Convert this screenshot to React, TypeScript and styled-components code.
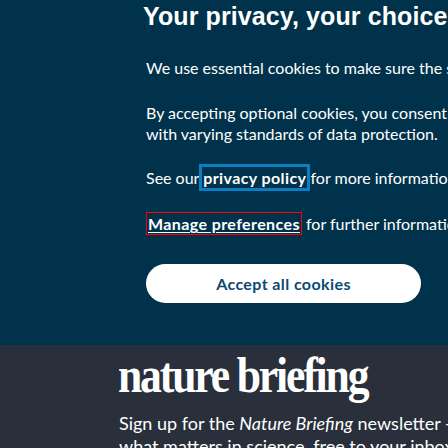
import React from "react";
import styled, { createGlobalStyle } from "styled-components";

const Global = createGlobalStyle`
  html, body { margin: 0; padding: 0; }
  body {
    background: #29303b;
    overflow: hidden;
    width: 448px;
    height: 448px;
    font-family: Lato, "Open Sans", sans-serif;
  }
`;

const Banner = styled.section`
  background: #01324b;
  color: #ffffff;
  padding: 0 0 42px 146px;
  display: flex;
  flex-direction: column;
  align-items: flex-start;
`;

const Title = styled.h2`
  margin: 0 0 0 -3px;
  font-family: "Liberation Sans", Arial, sans-serif;
  font-weight: 700;
  font-size: 25px;
  line-height: 32px;
  letter-spacing: 0.1px;
  white-space: nowrap;
`;

const Para = styled.p<{ $top: number }>`
  margin: ${(p) => p.$top}px 0 0;
  font-size: 16px;
  line-height: 21px;
  white-space: nowrap;
`;

const PolicyLink = styled.a`
  color: #ffffff;
  font-weight: 700;
  letter-spacing: 0.4px;
  text-decoration: none;
  outline: 3px solid #0a7fc4;
  outline-offset: 1px;
`;

const ManageButton = styled.button`
  font: inherit;
  font-weight: 700;
  letter-spacing: 0.4px;
  color: #ffffff;
  background: none;
  border: 1px solid #ff0000;
  padding: 0 1px;
  margin: 0;
  line-height: 21px;
  text-decoration: underline;
  text-underline-offset: 2px;
  cursor: pointer;
`;

const AcceptButton = styled.button`
  margin-top: 29px;
  width: 275px;
  height: 39px;
  padding: 0;
  border: none;
  border-radius: 20px;
  background: #ffffff;
  color: #0a4a75;
  font-family: Lato, "Open Sans", sans-serif;
  font-weight: 700;
  font-size: 16px;
  letter-spacing: 0.4px;
  cursor: pointer;
`;

const Briefing = styled.section`
  background: #29303b;
  color: #ffffff;
  padding: 4px 0 0 119px;
`;

const Logo = styled.div`
  margin-left: -1px;
  font-family: "Liberation Serif", "Times New Roman", serif;
  font-weight: 700;
  font-size: 51px;
  line-height: 52px;
  letter-spacing: -2.5px;
  white-space: nowrap;
  transform: scaleX(0.855);
  transform-origin: left center;
`;

const Pitch = styled.p`
  margin: 11px 0 0;
  font-size: 18px;
  line-height: 23px;
  white-space: nowrap;
  & em { font-style: italic; }
`;

export default function App() {
  return (
    <>
      <Global />
      <Banner>
        <Title>Your privacy, your choice</Title>
        <Para $top={25}>
          We use essential cookies to make sure the site can function. We also use optional cookies for advertising, personalisation of content, usage analysis, and social media.
        </Para>
        <Para $top={24}>
          By accepting optional cookies, you consent to the processing of your personal data - including transfers to third parties. Some third parties are outside of the European Economic Area,
          <br />
          with varying standards of data protection.
        </Para>
        <Para $top={23}>
          See our <PolicyLink href="#">privacy policy</PolicyLink> for more information on the use of your personal data.
        </Para>
        <Para $top={24}>
          <ManageButton type="button">Manage preferences</ManageButton> for further information and to change your choices.
        </Para>
        <AcceptButton type="button">Accept all cookies</AcceptButton>
      </Banner>
      <Briefing>
        <Logo>nature briefing</Logo>
        <Pitch>
          Sign up for the <em>Nature Briefing</em> newsletter —
          <br />
          what matters in science, free to your inbox daily.
        </Pitch>
      </Briefing>
    </>
  );
}
